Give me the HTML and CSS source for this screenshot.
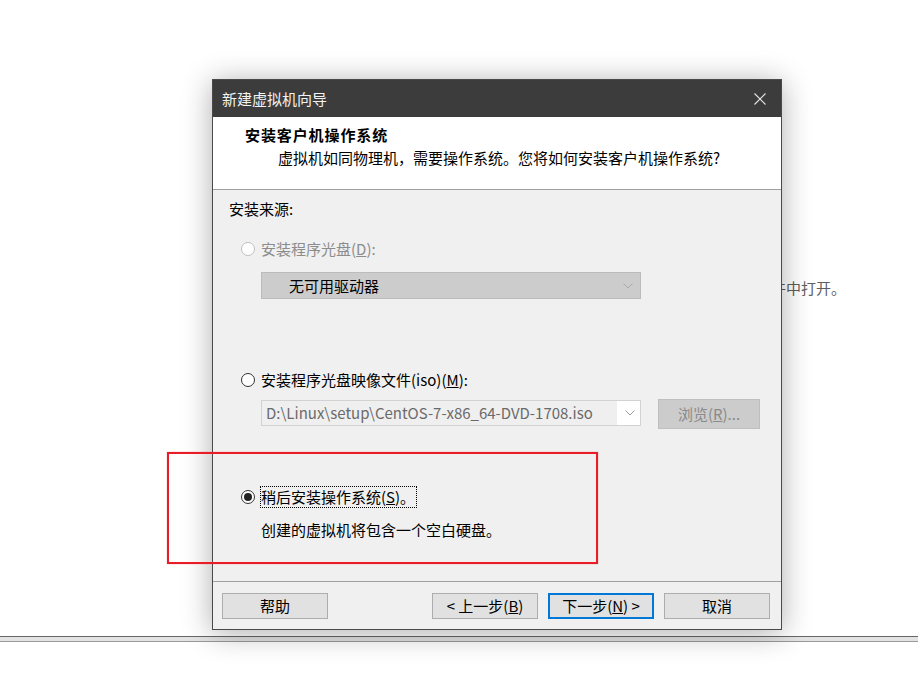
FILE: index.html
```html
<!DOCTYPE html>
<html lang="zh-CN">
<head>
<meta charset="utf-8">
<title>新建虚拟机向导</title>
<link rel="stylesheet" href="styles.css">
</head>
<body>
<div class="page">
  <p class="bg-text">件中打开。</p>
  <div class="bg-rule"></div>
  <div class="dialog">
    <div class="titlebar">
      <span class="title">新建虚拟机向导</span>
      <svg class="close" width="12" height="12" viewBox="0 0 12 12"><path d="M0.5 0.5 L11.5 11.5 M11.5 0.5 L0.5 11.5" stroke="#e6e6e6" stroke-width="1.1" fill="none"/></svg>
    </div>
    <div class="header">
      <div class="h-title">安装客户机操作系统</div>
      <div class="h-sub">虚拟机如同物理机，需要操作系统。您将如何安装客户机操作系统?</div>
    </div>
    <div class="body">
      <div class="src-label">安装来源:</div>
      <div class="option opt-cd disabled"><span class="radio"></span><span class="label">安装程序光盘(<u>D</u>):</span></div>
      <div class="select">
        <span class="select-text">无可用驱动器</span>
        <svg class="chev" width="10" height="6" viewBox="0 0 10 6"><path d="M0.5 0.5 L5 5 L9.5 0.5" stroke="#aaaaaa" stroke-width="1" fill="none"/></svg>
      </div>
      <div class="option opt-iso"><span class="radio"></span><span class="label">安装程序光盘映像文件(iso)(<u>M</u>):</span></div>
      <div class="iso-row">
        <div class="combo">
          <span class="combo-text">D:\Linux\setup\CentOS-7-x86_64-DVD-1708.iso</span>
          <span class="combo-btn"><svg width="10" height="6" viewBox="0 0 10 6"><path d="M0.5 0.5 L5 5 L9.5 0.5" stroke="#9a9a9a" stroke-width="1" fill="none"/></svg></span>
        </div>
        <button class="browse">浏览(<u>R</u>)...</button>
      </div>
      <div class="option opt-later"><span class="radio checked"></span><span class="label focus">稍后安装操作系统(<u>S</u>)。</span></div>
      <div class="desc">创建的虚拟机将包含一个空白硬盘。</div>
    </div>
    <div class="footer">
      <button class="btn">帮助</button>
      <div class="spacer"></div>
      <button class="btn">&lt; 上一步(<u>B</u>)</button>
      <button class="btn default">下一步(<u>N</u>) &gt;</button>
      <button class="btn">取消</button>
    </div>
  </div>
  <div class="highlight"></div>
</div>
</body>
</html>
```

FILE: styles.css
```css
* { box-sizing: border-box; }
html, body { margin: 0; padding: 0; background: #ffffff; }
body {
  font-family: "Noto Sans CJK SC", "Noto Sans", sans-serif;
  font-size: 15px;
  color: #000;
}
.page {
  position: relative;
  width: 918px;
  height: 693px;
  overflow: hidden;
  background: #fff;
}
.bg-text {
  position: absolute;
  left: 771px;
  top: 278px;
  margin: 0;
  line-height: 20px;
  color: #5e5e5e;
  font-size: 15px;
}
.bg-rule {
  position: absolute;
  left: 0;
  top: 636px;
  width: 918px;
  height: 6px;
  border-top: 1px solid #666;
  border-bottom: 1px solid #9a9a9a;
  background: #e3e3e3;
}
.dialog {
  position: absolute;
  left: 212px;
  top: 79px;
  width: 570px;
  height: 551px;
  border: 1px solid #4a4a4a;
  background: #f0f0f0;
  box-shadow: 0 3px 28px rgba(0, 0, 0, 0.32);
  display: flex;
  flex-direction: column;
}
.titlebar {
  height: 37px;
  background: #3c3c3c;
  display: flex;
  align-items: center;
  justify-content: space-between;
  padding: 0 15px 0 9px;
  flex: none;
}
.title {
  color: #f2f2f2;
  line-height: 20px;
}
.close { display: block; }
.header {
  height: 73px;
  flex: none;
  background: #fff;
  border-bottom: 1px solid #a0a0a0;
  padding-top: 8px;
}
.h-title {
  font-weight: bold;
  line-height: 20px;
  padding-left: 32px;
  letter-spacing: 0.9px;
}
.h-sub {
  line-height: 20px;
  padding-left: 65px;
  margin-top: 3px;
}
.body {
  height: 391px;
  flex: none;
  padding: 9px 0 0 0;
}
.src-label {
  line-height: 20px;
  padding-left: 16px;
}
.option {
  display: flex;
  align-items: center;
  gap: 6px;
  padding-left: 28px;
  height: 20px;
  line-height: 20px;
}
.opt-cd { margin-top: 20px; }
.opt-iso { margin-top: 71px; }
.opt-later { margin-top: 58px; }
.disabled .label { color: #8c8c8c; }
.radio {
  width: 14px;
  height: 14px;
  border-radius: 50%;
  border: 1px solid #333;
  background: #fff;
  flex: none;
  display: flex;
  align-items: center;
  justify-content: center;
}
.disabled .radio { border-color: #bfbfbf; }
.radio.checked::after {
  content: "";
  width: 8px;
  height: 8px;
  border-radius: 50%;
  background: #222;
}
.focus {
  outline: 1px dotted #000;
  outline-offset: 0;
  height: 20px;
  line-height: 20px;
  padding: 0 1px 0 0;
}
.select {
  margin: 13px 0 0 48px;
  width: 380px;
  height: 27px;
  background: #cccccc;
  border: 1px solid #bcbcbc;
  display: flex;
  align-items: center;
  justify-content: space-between;
  padding: 0 7px 0 27px;
}
.select-text { line-height: 20px; }
.chev { display: block; }
.iso-row {
  display: flex;
  align-items: flex-start;
  gap: 17px;
  margin: 9px 0 0 48px;
  height: 30px;
}
.combo {
  margin-top: 1px;
  width: 380px;
  height: 26px;
  border: 1px solid #d2d2d2;
  background: #fff;
  display: flex;
  align-items: stretch;
  padding: 0;
}
.combo-text {
  flex: 1;
  background: #efefef;
  color: #6a6a6a;
  line-height: 24px;
  padding-left: 4px;
  margin-right: 2px;
  white-space: nowrap;
  overflow: hidden;
}
.combo-btn {
  width: 21px;
  display: flex;
  align-items: center;
  justify-content: center;
}
.browse {
  width: 102px;
  height: 30px;
  background: #cccccc;
  border: 1px solid #bfbfbf;
  color: #8a8a8a;
  font-family: inherit;
  font-size: 15px;
  padding: 0;
  line-height: 20px;
}
.desc {
  margin-top: 13px;
  padding-left: 48px;
  line-height: 20px;
}
.footer {
  flex: 1;
  border-top: 1px solid #a0a0a0;
  display: flex;
  align-items: flex-start;
  gap: 10px;
  padding: 11px 11px 0 9px;
}
.spacer { flex: 1; }
.btn {
  width: 106px;
  height: 26px;
  background: #e1e1e1;
  border: 1px solid #adadad;
  font-family: inherit;
  font-size: 15px;
  color: #000;
  padding: 0;
  line-height: 20px;
}
.btn.default {
  border: 2px solid #0078d7;
}
.highlight {
  position: absolute;
  left: 167px;
  top: 452px;
  width: 431px;
  height: 112px;
  border: 2px solid #ea1c26;
  box-shadow: 0 0 1px rgba(234, 28, 38, 0.5);
}
```
